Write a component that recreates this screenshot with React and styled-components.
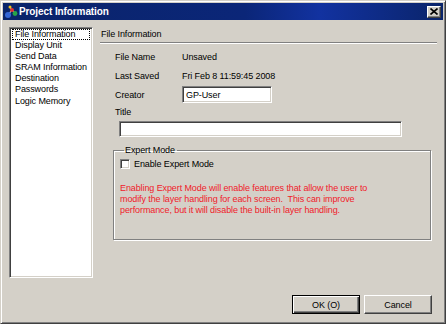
import React from 'react';
import styled, { createGlobalStyle } from 'styled-components';

const GlobalStyle = createGlobalStyle`
    html, body {
        margin: 0;
        padding: 0;
        background: #d4d0c8;
    }
    body {
        font-family: "Liberation Sans", Arial, sans-serif;
        font-size: 9px;
        letter-spacing: -0.1px;
        color: #000;
    }
`;

const Window = styled.div`
    width: 446px;
    height: 324px;
    box-sizing: border-box;
    background: #d4d0c8;
    border: 1px solid;
    border-color: #d4d0c8 #404040 #404040 #d4d0c8;
    box-shadow: inset 1px 1px #fff, inset -1px -1px #808080;
    padding: 2px;
    display: flex;
    flex-direction: column;
`;

const TitleBar = styled.div`
    height: 17px;
    display: flex;
    align-items: center;
    gap: 1px;
    padding: 0 2px 0 1px;
    background: linear-gradient(90deg, #0a246a 0%, #0b2678 55%, #1232a0 72%, #0a246a 100%);
    color: #fff;
    font-weight: bold;
    font-size: 10px;
`;

const TitleText = styled.span`
    flex: 1;
    line-height: 17px;
`;

const CloseButton = styled.div`
    width: 14px;
    height: 12px;
    box-sizing: border-box;
    background: #d4d0c8;
    border: 1px solid;
    border-color: #fff #404040 #404040 #fff;
    box-shadow: inset -1px -1px #808080;
    display: flex;
    align-items: center;
    justify-content: center;
`;

const Body = styled.div`
    flex: 1;
    display: flex;
    flex-direction: column;
    padding: 7px 6px 0 6px;
`;

const MainRow = styled.div`
    display: flex;
    gap: 7px;
`;

const NavList = styled.div`
    width: 84px;
    height: 251px;
    box-sizing: border-box;
    background: #fff;
    border: 1px solid;
    border-color: #808080 #fff #fff #808080;
    box-shadow: inset 1px 1px #404040, inset -1px -1px #d4d0c8;
    padding: 1px 2px;
`;

const NavItem = styled.div`
    height: 11.1px;
    line-height: 11.1px;
    padding-left: 3px;
    white-space: nowrap;
    outline: ${props => (props.focused ? '1px dotted #000' : 'none')};
    outline-offset: -1px;
`;

const Panel = styled.div`
    flex: 1;
    display: flex;
    flex-direction: column;
`;

const PanelHeader = styled.div`
    line-height: 14px;
    padding-left: 1px;
    margin-bottom: 1px;
`;

const Separator = styled.div`
    height: 1px;
    background: #808080;
    border-bottom: 1px solid #fff;
`;

const InfoBlock = styled.div`
    padding: 3px 0 0 15px;
    display: flex;
    flex-direction: column;
`;

const InfoRow = styled.div`
    height: 19px;
    display: flex;
    align-items: center;
`;

const Label = styled.span`
    width: 67px;
`;

const TextBox = styled.div`
    box-sizing: border-box;
    width: ${props => props.width}px;
    height: ${props => props.height}px;
    margin-left: ${props => props.offset || 0}px;
    background: #fff;
    border: 1px solid;
    border-color: #808080 #fff #fff #808080;
    box-shadow: inset 1px 1px #404040, inset -1px -1px #d4d0c8;
    padding-left: 3px;
    display: flex;
    align-items: center;
`;

const TitleLabel = styled.div`
    line-height: 17px;
    height: 17px;
`;

const GroupBox = styled.fieldset`
    margin: 8px 6px 0 13px;
    padding: 3px 6px 23px 6px;
    border: 1px solid #808080;
    box-shadow: 1px 1px 0 #fff, inset 1px 1px 0 #fff;
    min-width: 0;
`;

const Legend = styled.legend`
    padding: 0 2px 0 1px;
    margin-left: 4px;
    line-height: 10px;
`;

const CheckRow = styled.label`
    display: flex;
    align-items: center;
    gap: 4px;
    height: 12px;
`;

const CheckBox = styled.span`
    width: 10px;
    height: 10px;
    box-sizing: border-box;
    background: #fff;
    border: 1px solid;
    border-color: #808080 #fff #fff #808080;
    box-shadow: inset 1px 1px #404040, inset -1px -1px #d4d0c8;
`;

const Warning = styled.p`
    margin: 13px 0 0 0;
    color: #f0202a;
    line-height: 11px;
    white-space: pre;
`;

const Footer = styled.div`
    display: flex;
    justify-content: flex-end;
    gap: 4px;
    margin-top: 17px;
    padding-right: 5px;
`;

const Button = styled.div`
    width: 68px;
    height: 19px;
    box-sizing: border-box;
    display: flex;
    align-items: center;
    justify-content: center;
    background: #d4d0c8;
    border: 1px solid;
    border-color: ${props => (props.primary ? '#000' : '#fff #404040 #404040 #fff')};
    box-shadow: ${props => (props.primary
        ? 'inset 1px 1px #fff, inset -1px -1px #404040, inset -2px -2px #808080'
        : 'inset -1px -1px #808080')};
`;

const AppIcon = () => (
    <svg width="14" height="14" viewBox="0 0 14 14">
        <path d="M4 10 L8 5 L11 8 M8 5 L6 2" stroke="#b8b8b8" strokeWidth="1.2" fill="none" />
        <circle cx="4" cy="10" r="3" fill="#3566d6" />
        <circle cx="11" cy="8.5" r="2.4" fill="#28a448" />
        <circle cx="8" cy="5" r="2" fill="#e03030" />
        <circle cx="6" cy="2" r="1.5" fill="#f2c21c" />
    </svg>
);

const CloseGlyph = () => (
    <svg width="8" height="7" viewBox="0 0 8 7">
        <path d="M0.5 0.5 L7.5 6.5 M7.5 0.5 L0.5 6.5" stroke="#000" strokeWidth="1.6" />
    </svg>
);

const navItems = [
    'File Information',
    'Display Unit',
    'Send Data',
    'SRAM Information',
    'Destination',
    'Passwords',
    'Logic Memory',
];

const warningText =
    'Enabling Expert Mode will enable features that allow the user to\n' +
    'modify the layer handling for each screen.  This can improve\n' +
    'performance, but it will disable the built-in layer handling.';

export default function App() {
    return (
        <>
            <GlobalStyle />
            <Window>
                <TitleBar>
                    <AppIcon />
                    <TitleText>Project Information</TitleText>
                    <CloseButton>
                        <CloseGlyph />
                    </CloseButton>
                </TitleBar>
                <Body>
                    <MainRow>
                        <NavList>
                            {navItems.map((item, i) => (
                                <NavItem key={item} focused={i === 0}>{item}</NavItem>
                            ))}
                        </NavList>
                        <Panel>
                            <PanelHeader>File Information</PanelHeader>
                            <Separator />
                            <InfoBlock>
                                <InfoRow>
                                    <Label>File Name</Label>
                                    <span>Unsaved</span>
                                </InfoRow>
                                <InfoRow>
                                    <Label>Last Saved</Label>
                                    <span>Fri Feb 8 11:59:45 2008</span>
                                </InfoRow>
                                <InfoRow>
                                    <Label>Creator</Label>
                                    <TextBox width={90} height={17}>GP-User</TextBox>
                                </InfoRow>
                                <TitleLabel>Title</TitleLabel>
                                <TextBox width={283} height={16} offset={4} />
                            </InfoBlock>
                            <GroupBox>
                                <Legend>Expert Mode</Legend>
                                <CheckRow>
                                    <CheckBox />
                                    <span>Enable Expert Mode</span>
                                </CheckRow>
                                <Warning>{warningText}</Warning>
                            </GroupBox>
                        </Panel>
                    </MainRow>
                    <Footer>
                        <Button primary>OK (O)</Button>
                        <Button>Cancel</Button>
                    </Footer>
                </Body>
            </Window>
        </>
    );
}
